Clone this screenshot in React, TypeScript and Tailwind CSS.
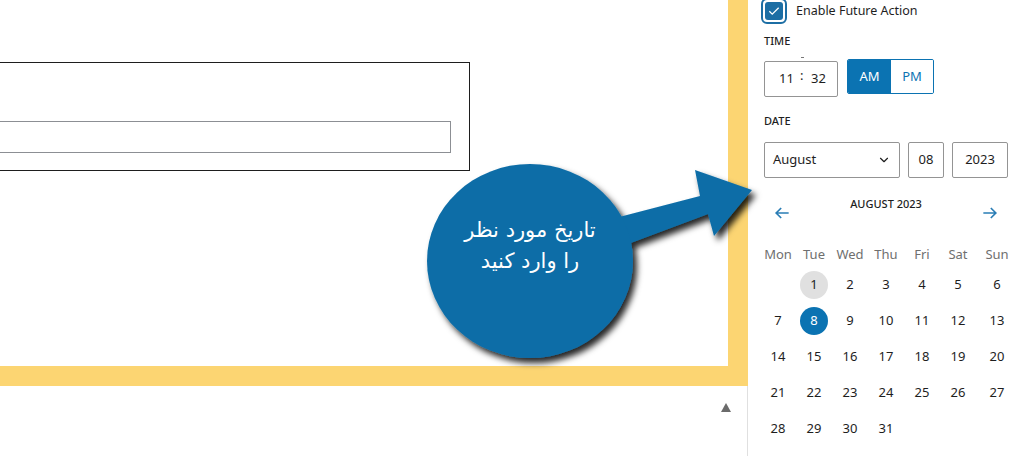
import { ChevronDown } from "lucide-react";

const WEEKDAYS = ["Mon", "Tue", "Wed", "Thu", "Fri", "Sat", "Sun"];

// August 2023 starts on a Tuesday
const DAYS: (number | null)[] = [null, ...Array.from({ length: 31 }, (_, i) => i + 1)];

function ArrowLeft() {
  return (
    <svg width="20" height="20" viewBox="0 0 24 24" fill="none" stroke="#2a7db5" strokeWidth="2">
      <path d="M20 12H5M11 6l-6 6 6 6" />
    </svg>
  );
}

function ArrowRight() {
  return (
    <svg width="20" height="20" viewBox="0 0 24 24" fill="none" stroke="#2a7db5" strokeWidth="2">
      <path d="M4 12h15M13 6l6 6-6 6" />
    </svg>
  );
}

function Callout() {
  return (
    <>
      <svg
        className="absolute left-0 top-0 pointer-events-none"
        width="1024"
        height="456"
        viewBox="0 0 1024 456"
      >
        <defs>
          <filter id="shadow" x="-20%" y="-20%" width="140%" height="140%">
            <feDropShadow dx="4" dy="5" stdDeviation="3" floodColor="#000" floodOpacity="0.85" />
          </filter>
        </defs>
        <g filter="url(#shadow)" fill="#0c6da7">
          <polygon points="600,222 700,196 695,170 752,190 714,236 708,214 612,250" />
          <ellipse cx="530" cy="261" rx="103" ry="97" />
        </g>
      </svg>
      <div
        dir="rtl"
        className="absolute left-[430px] top-[215px] w-[200px] text-center text-white text-[21px] leading-[31px] pointer-events-none"
        style={{ fontFamily: '"DejaVu Sans", "Noto Sans", sans-serif' }}
      >
        <div>تاریخ مورد نظر</div>
        <div>را وارد کنید</div>
      </div>
    </>
  );
}

export default function App() {
  return (
    <div
      className="relative w-[1024px] h-[456px] overflow-hidden bg-white flex text-[#1e1e1e]"
      style={{ fontFamily: '"Noto Sans", "Open Sans", sans-serif' }}
    >
      {/* editor area */}
      <div className="w-[748px] flex flex-col shrink-0">
        <div className="h-[386px] bg-[#fcd572] pr-[20px] pb-[20px]">
          <div className="h-full bg-white pt-[62px]">
            <div className="-ml-px w-[471px] h-[109px] border border-[#1e1e1e] pt-[58px] pr-[18px]">
              <div className="h-[32px] border border-[#8c8f94] border-l-0" />
            </div>
          </div>
        </div>
        <div className="flex-1 border-r border-[#e0e0e0] flex justify-end pr-[16px] pt-[17px]">
          <svg width="10" height="9" viewBox="0 0 10 9">
            <polygon points="5,0 10,9 0,9" fill="#6b6b6b" />
          </svg>
        </div>
      </div>

      {/* sidebar */}
      <div className="w-[276px] min-w-0 shrink-0 pl-[16px] pr-[16px] text-[13px]">
        <div className="-mt-[2px] -ml-[3px] flex items-center gap-[9px]">
          <div className="w-[26px] h-[26px] rounded-[6px] border-2 border-[#1c6ea4] p-[2px] bg-white">
            <div className="w-full h-full rounded-[3px] bg-[#1c6ea4] flex items-center justify-center">
              <svg width="14" height="14" viewBox="0 0 24 24" fill="none" stroke="white" strokeWidth="2.2">
                <path d="M4 12.5l5 5L20 6.5" />
              </svg>
            </div>
          </div>
          <span className="text-[12.5px]">Enable Future Action</span>
        </div>

        <div className="mt-[9px] text-[11px] font-medium uppercase leading-[16px]">Time</div>
        <div className="mt-[10px] flex items-start gap-[9px]">
          <div className="relative mt-[2px] w-[74px] h-[36px] border border-[#949494] rounded-[2px] flex items-center text-[13px]">
            <span className="w-[36px] text-right pr-[6px]">11</span>
            <span className="w-[2px] text-center -mt-[6px]">:</span>
            <span className="w-[36px] pl-[9px]">32</span>
            <div className="absolute left-[36px] -top-[5px] w-[3px] h-px bg-[#777]" />
          </div>
          <div className="flex h-[35px] border border-[#0b73b2] rounded-[2px] overflow-hidden">
            <div className="w-[43px] bg-[#0b73b2] text-white flex items-center justify-center">AM</div>
            <div className="w-[42px] bg-white text-[#0b73b2] flex items-center justify-center">PM</div>
          </div>
        </div>

        <div className="mt-[16px] text-[11px] font-medium uppercase leading-[16px]">Date</div>
        <div className="mt-[13px] flex gap-[8px]">
          <div className="w-[136px] h-[36px] border border-[#949494] rounded-[2px] flex items-center justify-between pl-[8px] pr-[8px]">
            <span>August</span>
            <ChevronDown className="w-[14px] h-[14px]" strokeWidth={2} />
          </div>
          <div className="w-[36px] h-[36px] border border-[#949494] rounded-[2px] flex items-center justify-center">08</div>
          <div className="w-[56px] h-[36px] border border-[#949494] rounded-[2px] flex items-center justify-center">2023</div>
        </div>

        <div className="mt-[18px] flex items-start justify-between pl-[8px] pr-[8px]">
          <div className="mt-[7px]">
            <ArrowLeft />
          </div>
          <div className="text-[11px] font-medium uppercase leading-[16px]">August 2023</div>
          <div className="mt-[7px]">
            <ArrowRight />
          </div>
        </div>

        <div className="-ml-[4px] mt-[19px] grid grid-cols-[repeat(6,36px)_42px] text-[13px]">
          {WEEKDAYS.map((d) => (
            <div key={d} className="h-[25px] flex items-center justify-center text-[#6f6f6f]">
              {d}
            </div>
          ))}
          {DAYS.map((d, i) => (
            <div key={i} className="h-[36px] flex items-center justify-center">
              {d === 1 ? (
                <span className="w-[28px] h-[28px] rounded-full bg-[#e0e0e0] flex items-center justify-center">1</span>
              ) : d === 8 ? (
                <span className="w-[28px] h-[28px] rounded-full bg-[#0b73b2] text-white flex items-center justify-center">8</span>
              ) : (
                d
              )}
            </div>
          ))}
        </div>
      </div>

      <Callout />
    </div>
  );
}
